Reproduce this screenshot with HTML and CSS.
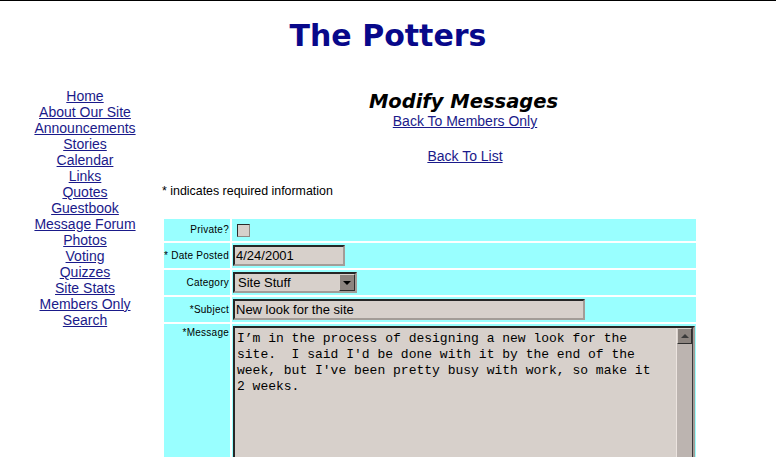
FILE: index.html
```html
<!DOCTYPE html>
<html>
<head>
<meta charset="utf-8">
<title>The Potters - Modify Messages</title>
<link rel="stylesheet" href="styles.css">
</head>
<body>
<h1 class="site-title">The Potters</h1>
<div class="layout">
  <nav class="sidenav">
    <a href="#">Home</a>
    <a href="#">About Our Site</a>
    <a href="#">Announcements</a>
    <a href="#">Stories</a>
    <a href="#">Calendar</a>
    <a href="#">Links</a>
    <a href="#">Quotes</a>
    <a href="#">Guestbook</a>
    <a href="#">Message Forum</a>
    <a href="#">Photos</a>
    <a href="#">Voting</a>
    <a href="#">Quizzes</a>
    <a href="#">Site Stats</a>
    <a href="#">Members Only</a>
    <a href="#">Search</a>
  </nav>
  <main class="content">
    <h2 class="page-title">Modify Messages</h2>
    <a class="back" href="#">Back To Members Only</a>
    <a class="back back-list" href="#">Back To List</a>
    <p class="note">* indicates required information</p>
    <table class="form">
      <tr class="row-short">
        <td class="label">Private?</td>
        <td class="value"><input class="check" type="checkbox"></td>
      </tr>
      <tr>
        <td class="label">* Date Posted</td>
        <td class="value"><input class="field field-date" type="text" value="4/24/2001"></td>
      </tr>
      <tr>
        <td class="label">Category</td>
        <td class="value">
          <div class="select-box">
            <select class="select"><option>Site Stuff</option></select>
            <span class="drop-btn"></span>
          </div>
        </td>
      </tr>
      <tr>
        <td class="label">*Subject</td>
        <td class="value"><input class="field field-subject" type="text" value="New look for the site"></td>
      </tr>
      <tr class="row-message">
        <td class="label label-top">*Message</td>
        <td class="value">
          <div class="message-box">
            <textarea class="message">I’m in the process of designing a new look for the site.  I said I'd be done with it by the end of the week, but I've been pretty busy with work, so make it 2 weeks.</textarea>
            <div class="scrollbar"><span class="scroll-up"></span></div>
          </div>
        </td>
      </tr>
    </table>
  </main>
</div>
</body>
</html>
```

FILE: styles.css
```css
html {
  border-top: 1px solid #000;
  overflow: hidden;
  background: #fff;
}

body {
  margin: 8px;
  font-family: "Liberation Sans", Arial, sans-serif;
  color: #000;
}

a {
  color: #1a1a8a;
  text-decoration: underline;
}

.site-title {
  margin: 9px 0 0;
  height: 36px;
  font: bold 30px/36px "DejaVu Sans", Verdana, sans-serif;
  color: #08088a;
  text-align: center;
}

.layout {
  display: flex;
  margin-top: 34px;
}

.sidenav {
  width: 154px;
  flex: none;
  display: flex;
  flex-direction: column;
  align-items: center;
  font-size: 14px;
  line-height: 16px;
}

.content {
  flex: 1;
}

.page-title {
  margin: 2px 0 0;
  height: 23px;
  font: italic bold 19.5px/24px "DejaVu Sans", Verdana, sans-serif;
  text-align: center;
  padding-right: 3px;
}

.back {
  display: block;
  width: fit-content;
  margin: 0 auto;
  font-size: 14px;
  line-height: 16px;
}

.back-list {
  margin-top: 19px;
}

.note {
  margin: 20px 0 0;
  font-size: 12.4px;
  line-height: 14px;
}

.form {
  margin-top: 19px;
  border-collapse: separate;
  border-spacing: 2px;
  width: 536px;
}

.form td {
  background: #99ffff;
  height: 25px;
  box-sizing: border-box;
}

.form .row-short td {
  height: 22px;
}

.label {
  width: 66px;
  padding: 0 1px 0 0;
  text-align: right;
  vertical-align: middle;
  font-size: 10px;
  letter-spacing: 0.25px;
  line-height: 12px;
  white-space: nowrap;
}

.label-top {
  vertical-align: top;
  padding-top: 3px;
}

.value {
  padding: 2px 1px;
  vertical-align: middle;
}

.row-message .value {
  vertical-align: top;
}

.check {
  appearance: none;
  display: block;
  width: 13px;
  height: 13px;
  margin: 0 0 0 4px;
  box-sizing: border-box;
  border: 1px solid;
  border-color: #2a2a2a #8f8984 #8f8984 #2a2a2a;
  background: #d7d0cb;
}

.field {
  display: block;
  height: 21px;
  box-sizing: border-box;
  border: 2px solid;
  border-color: #262626 #a39c97 #a39c97 #262626;
  background: #d7d0cb;
  font: 13px "Liberation Sans", Arial, sans-serif;
  color: #000;
  padding: 0 1px;
  margin: 0;
}

.field-date {
  width: 112px;
}

.field-subject {
  width: 352px;
}

.select-box {
  display: flex;
  align-items: center;
  width: 124px;
  height: 21px;
  box-sizing: border-box;
  border: 2px solid;
  border-color: #262626 #a39c97 #a39c97 #262626;
  background: #d7d0cb;
}

.select {
  appearance: none;
  flex: 1;
  min-width: 0;
  border: none;
  background: transparent;
  font: 13px "Liberation Sans", Arial, sans-serif;
  color: #000;
  padding: 0 0 0 3px;
  margin: 0;
}

.drop-btn {
  width: 16px;
  height: 17px;
  box-sizing: border-box;
  border: 1px solid;
  border-color: #d8d1cc #2e2e2e #2e2e2e #d8d1cc;
  background: #8c847f;
  display: flex;
  align-items: center;
  justify-content: center;
}

.drop-btn::before {
  content: "";
  border-left: 4px solid transparent;
  border-right: 4px solid transparent;
  border-top: 4px solid #000;
}

.message-box {
  display: flex;
  width: 462px;
  height: 160px;
  box-sizing: border-box;
  border: 2px solid;
  border-color: #262626 #a39c97 #a39c97 #262626;
  background: #d7d0cb;
}

.message {
  flex: 1;
  min-width: 0;
  border: none;
  margin: 0;
  background: transparent;
  resize: none;
  overflow: hidden;
  padding: 3px 20px 2px 2px;
  font: 13px/16px "Liberation Mono", "Courier New", monospace;
  color: #000;
}

.scrollbar {
  width: 17px;
  flex: none;
  box-sizing: border-box;
  border-left: 1px solid #ece4e0;
  border-right: 1px solid #3a3a3a;
  background: #bcb4b0;
  display: flex;
  flex-direction: column;
}

.scroll-up {
  height: 16px;
  box-sizing: border-box;
  border: 1px solid;
  border-color: #d8d1cc #2e2e2e #2e2e2e #d8d1cc;
  background: #8c847f;
  display: flex;
  align-items: center;
  justify-content: center;
}

.scroll-up::before {
  content: "";
  border-left: 4px solid transparent;
  border-right: 4px solid transparent;
  border-bottom: 4px solid #3a3a3a;
}
```
